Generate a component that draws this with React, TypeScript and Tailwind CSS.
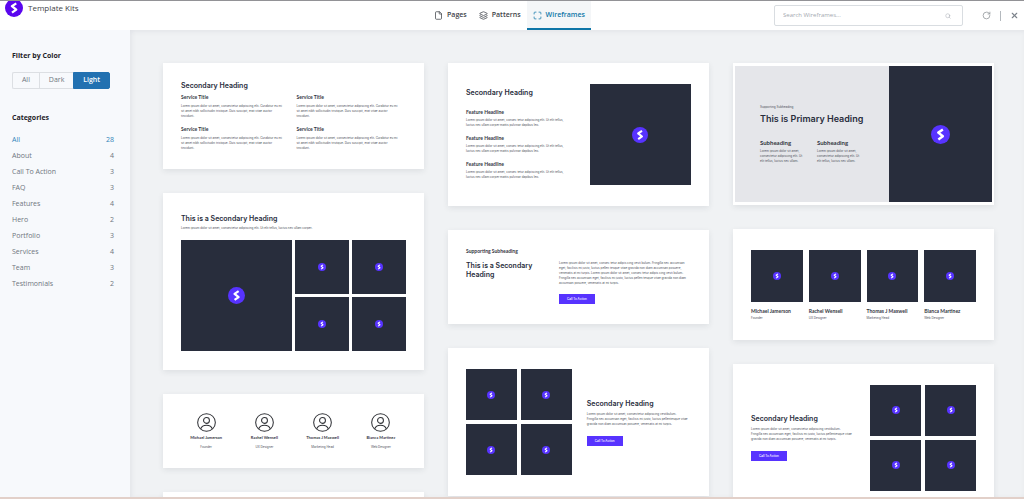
import { useState } from 'react'
import type { ReactNode } from 'react'
import clsx from 'clsx'
import { File, Layers, Maximize, RotateCw, Search, X } from 'lucide-react'

const CATEGORIES = [
  { name: 'All', count: 28 },
  { name: 'About', count: 4 },
  { name: 'Call To Action', count: 3 },
  { name: 'FAQ', count: 3 },
  { name: 'Features', count: 4 },
  { name: 'Hero', count: 2 },
  { name: 'Portfolio', count: 3 },
  { name: 'Services', count: 4 },
  { name: 'Team', count: 3 },
  { name: 'Testimonials', count: 2 },
]

const TABS = [
  { name: 'Pages', icon: File },
  { name: 'Patterns', icon: Layers },
  { name: 'Wireframes', icon: Maximize },
]

const TEAM = [
  { name: 'Michael Jamerson', role: 'Founder' },
  { name: 'Rachel Wensell', role: 'UX Designer' },
  { name: 'Thomas J Maxwell', role: 'Marketing Head' },
  { name: 'Bianca Martinez', role: 'Web Designer' },
]

const SERVICE_TEXT = 'Lorem ipsum dolor sit amet, consectetur adipiscing elit. Curabitur eu mi\nsit amet nibh sollicitudin tristique. Duis suscipit, erat vitae auctor\ntincidunt.'
const FEATURE_TEXT = 'Lorem ipsum dolor sit amet, consec tetur adipiscing elit. Ut elit tellus,\nluctus nec ullam corper mattis pulvinar dapibus leo.'
const CTA_TEXT = 'Lorem ipsum dolor sit amet, consectetur adipiscing vestibulum.\nFringilla nec accumsan eget, facilisis mi justo, luctus pellentesque vitae\ngravida non diam accumsan posuere, venenatis at mi turpis.'
const LONG_TEXT = 'Lorem ipsum dolor sit amet, consec tetur adipis cing vesti bulum. Fringilla nec accumsan\neget, facilisis mi justo, luctus pellen tesque vitae gravida non diam accumsan posuere,\nvenenatis at mi turpis. Lorem ipsum dolor sit amet, consec tetur adipis cing vesti bulum.\nFringilla nec accumsan eget, facilisis mi justo, luctus pellen tesque vitae gravida non diam\naccumsan posuere, venenatis at mi turpis.'
const HERO_TEXT = 'Lorem ipsum dolor sit amet,\nconsectetur adipiscing elit. Ut\nelit tellus, luctus nec ullam.'

function Logo({ className }: { className: string }) {
  return (
    <svg viewBox="0 0 24 24" className={clsx('shrink-0', className)} aria-hidden="true">
      <circle cx="12" cy="12" r="12" fill="currentColor" />
      <path d="M15 5.8 9.2 9.6l5.8 4.6-5.7 4" fill="none" stroke="#fff" strokeWidth="3.1" strokeLinejoin="round" />
    </svg>
  )
}

function Avatar() {
  return (
    <svg viewBox="0 0 20 20" className="size-[19px]" fill="none" stroke="#2f3136" strokeWidth="1.1" aria-hidden="true">
      <circle cx="10" cy="10" r="9.3" />
      <circle cx="10" cy="7.8" r="3.1" />
      <path d="M3.8 16.8c.9-2.6 3.2-4 6.2-4s5.3 1.4 6.2 4" />
    </svg>
  )
}

function Tile({ className, logo = 'size-[8px]' }: { className?: string; logo?: string }) {
  return (
    <div className={clsx('flex aspect-square items-center justify-center bg-[#282d3c] text-[#5733ff]', className)}>
      <Logo className={logo} />
    </div>
  )
}

function Card({ className, children }: { className?: string; children?: ReactNode }) {
  return <article className={clsx('bg-white shadow-[0_2px_6px_rgba(30,41,59,0.09)]', className)}>{children}</article>
}

function Heading({ children }: { children: ReactNode }) {
  return <h3 className="whitespace-pre text-[7px] leading-[9px] font-semibold text-[#282d3c]">{children}</h3>
}

function Title({ children, size = 'text-[5px]' }: { children: ReactNode; size?: string }) {
  return (
    <h4 className={clsx('whitespace-nowrap font-[Lato,sans-serif] leading-[6px] font-bold text-[#33363f]', size)}>
      {children}
    </h4>
  )
}

function Copy({ children, className }: { children: ReactNode; className?: string }) {
  return <p className={clsx('whitespace-pre text-[3px] leading-[5px] text-[#4d515b]', className)}>{children}</p>
}

function CallToAction({ className }: { className?: string }) {
  return (
    <button className={clsx('block h-[10px] bg-[#5733ff] px-[8px] text-[3px] leading-[10px] font-medium text-white', className)}>
      Call To Action
    </button>
  )
}

function TileGrid() {
  return (
    <div className="grid w-[47%] shrink-0 grid-cols-2 gap-[4px]">
      {[1, 2, 3, 4].map(i => <Tile key={i} />)}
    </div>
  )
}

function CtaBlock() {
  return (
    <div className="min-w-0 flex-1">
      <Heading>Secondary Heading</Heading>
      <Copy className="mt-[4px]">{CTA_TEXT}</Copy>
      <CallToAction className="mt-[9px]" />
    </div>
  )
}

function Header() {
  const [tab, setTab] = useState('Wireframes')

  return (
    <header className="relative z-10 grid h-[30px] shrink-0 grid-cols-[1fr_auto_1fr] overflow-hidden border-t border-[#929296] bg-white pr-[5px] text-[7px]">
      <div className="flex h-[14px] items-center gap-[5px] pl-[5px]">
        <Logo className="size-[18px] text-[#5a06ee]" />
        <span className="text-[8px] text-[#3f4349]">Template Kits</span>
      </div>
      <nav className="flex">
        {TABS.map(({ name, icon: Icon }) => (
          <button
            key={name}
            onClick={() => setTab(name)}
            className={clsx(
              'flex items-center gap-[4px] border-b-2 px-[6px] pt-[2px] font-semibold',
              tab === name ? 'border-[#0f76a8] bg-[#f4f6f8] text-[#0f76a8]' : 'border-transparent text-[#3f4349]',
            )}
          >
            <Icon className="size-[9px]" />
            {name}
          </button>
        ))}
      </nav>
      <div className="flex items-center justify-end">
        <label className="flex h-[21px] w-[189px] items-center rounded-[2px] border border-[#d9dde1] px-[8px] text-[#a4a9b0]">
          <input
            type="search"
            aria-label="Search Wireframes"
            placeholder="Search Wireframes..."
            className="min-w-0 flex-1 text-[6px] placeholder:text-[#a4a9b0] focus:outline-none"
          />
          <Search className="mr-[3px] size-[6px]" />
        </label>
        <button aria-label="Refresh" className="ml-[19px] text-[#8c9196]">
          <RotateCw className="size-[9px]" />
        </button>
        <div className="mx-[9px] h-[10px] w-px bg-[#b4b9be]" />
        <button aria-label="Close" className="text-[#7c838b]">
          <X className="size-[9px]" strokeWidth={3} />
        </button>
      </div>
    </header>
  )
}

function Sidebar() {
  const [color, setColor] = useState('Light')
  const [category, setCategory] = useState('All')

  return (
    <aside className="w-[130px] shrink-0 bg-[#f7f9fc] pt-[20px] pr-[16px] pl-[12px] text-[7px] text-[#6f767e]">
      <h2 className="leading-[11px] font-bold text-[#1f2329]">Filter by Color</h2>
      <div className="mt-[11px] flex h-[17px] w-[98px]">
        {['All', 'Dark', 'Light'].map(c => (
          <button
            key={c}
            onClick={() => setColor(c)}
            className={clsx(
              'flex-auto border border-r-0 first:rounded-l-[2px] last:rounded-r-[2px] last:border-r',
              color === c ? 'border-[#2271b1] bg-[#2271b1] font-semibold text-white' : 'border-[#dcdfe3]',
            )}
          >
            {c}
          </button>
        ))}
      </div>
      <h2 className="mt-[23px] leading-[11px] font-bold text-[#1f2329]">Categories</h2>
      <ul className="mt-[9px]">
        {CATEGORIES.map(({ name, count }) => (
          <li key={name}>
            <button
              onClick={() => setCategory(name)}
              className={clsx('flex h-4 w-full items-center justify-between', category === name && 'text-[#2e84ba]')}
            >
              <span>{name}</span>
              <span>{count}</span>
            </button>
          </li>
        ))}
      </ul>
    </aside>
  )
}

export default function App() {
  return (
    <div className="flex h-screen flex-col overflow-hidden border-b-2 border-[#e2d0c9] bg-[#f0f2f4] font-['Open_Sans',sans-serif]">
      <Header />
      <div className="flex min-h-0 flex-1">
        <Sidebar />
        <main className="grid min-w-0 flex-1 grid-cols-3 gap-6 overflow-hidden pt-[33px] pr-[30px] pl-[33px] font-[Inter,sans-serif] shadow-[inset_0_3px_4px_rgba(30,41,59,0.03),inset_3px_0_4px_rgba(30,41,59,0.03)]">
          <div className="flex min-w-0 flex-col gap-6">
            <Card className="p-[18px]">
              <Heading>Secondary Heading</Heading>
              <div className="mt-[4px] grid grid-cols-2 gap-x-[6px] gap-y-[7px]">
                {[1, 2, 3, 4].map(i => (
                  <div key={i} className="min-w-0">
                    <Title>Service Title</Title>
                    <Copy className="mt-[4px]">{SERVICE_TEXT}</Copy>
                  </div>
                ))}
              </div>
            </Card>

            <Card className="px-[18px] pt-[21px] pb-[19px]">
              <Heading>This is a Secondary Heading</Heading>
              <Copy className="mt-[3px]">Lorem ipsum dolor sit amet, consectetur adipiscing elit. Ut elit tellus, luctus nec ullam corper.</Copy>
              <div className="mt-[9px] grid grid-cols-4 gap-[3px]">
                <Tile className="col-span-2 row-span-2" logo="size-[17px]" />
                {[1, 2, 3, 4].map(i => <Tile key={i} />)}
              </div>
            </Card>

            <Card className="grid grid-cols-4 px-[14px] pt-[19px] pb-[18px]">
              {TEAM.map(({ name, role }) => (
                <div key={name} className="flex flex-col items-center">
                  <Avatar />
                  <div className="mt-[3px]"><Title size="text-[4px]">{name}</Title></div>
                  <Copy className="mt-[4px]">{role}</Copy>
                </div>
              ))}
            </Card>

            <Card className="h-24 shrink-0" />
          </div>

          <div className="flex min-w-0 flex-col gap-6">
            <Card className="flex px-[18px] py-[21px]">
              <div className="min-w-0 flex-1 pt-[4px]">
                <Heading>Secondary Heading</Heading>
                <div className="mt-[12px] space-y-[7px]">
                  {[1, 2, 3].map(i => (
                    <div key={i}>
                      <Title>Feature Headline</Title>
                      <Copy className="mt-[3px]">{FEATURE_TEXT}</Copy>
                    </div>
                  ))}
                </div>
              </div>
              <Tile className="w-[45%]" logo="size-[16px]" />
            </Card>

            <Card className="px-[18px] pt-[18px] pb-[20px]">
              <Title>Supporting Subheading</Title>
              <div className="mt-[7px] flex">
                <div className="w-[93px] shrink-0">
                  <Heading>{'This is a Secondary\nHeading'}</Heading>
                </div>
                <div>
                  <Copy>{LONG_TEXT}</Copy>
                  <CallToAction className="mt-[8px]" />
                </div>
              </div>
            </Card>

            <Card className="flex items-center gap-[15px] px-[18px] py-[21px]">
              <TileGrid />
              <CtaBlock />
            </Card>
          </div>

          <div className="flex min-w-0 flex-col gap-6">
            <Card className="flex h-[142px] px-[2px] py-[3px]">
              <div className="flex min-w-0 flex-1 flex-col justify-center bg-[#e5e6ea] pl-[25px]">
                <Copy>Supporting Subheading</Copy>
                <h2 className="mt-[4px] text-[9px] leading-[10px] font-semibold whitespace-nowrap text-[#282d3c]">This is Primary Heading</h2>
                <div className="mt-[16px] flex gap-[12px]">
                  {[1, 2].map(i => (
                    <div key={i} className="w-[45px] shrink-0">
                      <Title size="text-[6px]">Subheading</Title>
                      <Copy className="mt-[3px]">{HERO_TEXT}</Copy>
                    </div>
                  ))}
                </div>
              </div>
              <div className="flex w-2/5 items-center justify-center bg-[#282d3c] text-[#5733ff]">
                <Logo className="size-[19px]" />
              </div>
            </Card>

            <Card className="grid grid-cols-4 gap-[6px] px-[18px] pt-[21px] pb-[19px]">
              {TEAM.map(({ name, role }) => (
                <div key={name} className="min-w-0">
                  <Tile />
                  <div className="mt-[6px]"><Title>{name}</Title></div>
                  <Copy className="mt-[2px]">{role}</Copy>
                </div>
              ))}
            </Card>

            <Card className="flex items-center gap-[15px] px-[18px] py-[21px]">
              <CtaBlock />
              <TileGrid />
            </Card>
          </div>
        </main>
      </div>
    </div>
  )
}
